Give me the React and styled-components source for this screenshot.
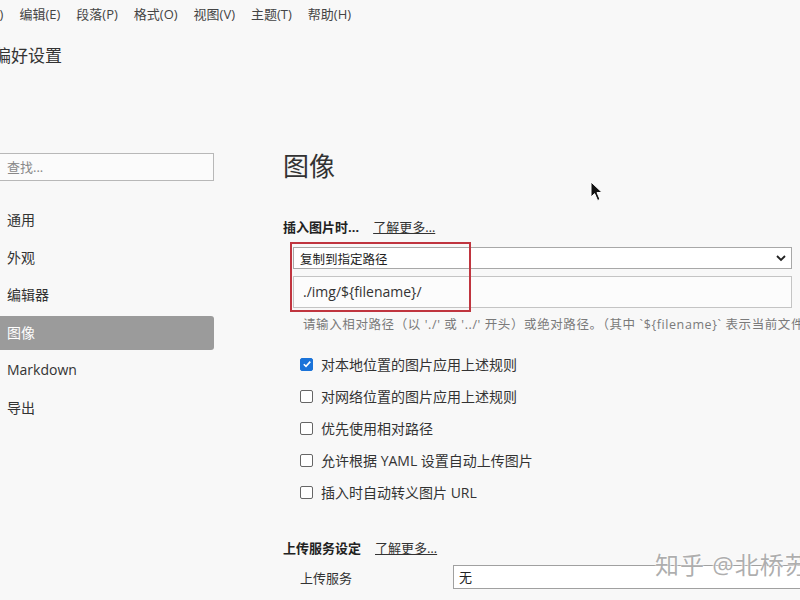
import React from 'react';
import styled, { createGlobalStyle } from 'styled-components';

const GlobalStyle = createGlobalStyle`
  html, body {
    margin: 0;
    padding: 0;
    background: #f8f8f8;
    overflow: hidden;
  }
  body {
    font-family: 'Open Sans', 'Noto Sans CJK SC', sans-serif;
    color: #333;
  }
`;

const Window = styled.div`
  position: relative;
  width: 806px;
  height: 600px;
  margin-left: -6px;
  overflow: hidden;
`;

const MenuBar = styled.div`
  display: flex;
  align-items: center;
  height: 28px;
  margin-left: -31px;
  gap: 16px;
  font-size: 13px;
  color: #444;
`;

const MenuItem = styled.span`
  line-height: 28px;
  white-space: nowrap;
`;

const Title = styled.div`
  height: 28px;
  line-height: 28px;
  margin-top: 14px;
  font-size: 17px;
  color: #333;
`;

const Body = styled.div`
  display: flex;
  margin-top: 69px;
`;

const Sidebar = styled.div`
  width: 220px;
  flex-shrink: 0;
  padding-top: 14px;
`;

const Search = styled.div`
  height: 26px;
  border: 1px solid #b8b8b8;
  background: #fbfbfb;
  padding-left: 12px;
  font-size: 13px;
  line-height: 26px;
  color: #888;
`;

const NavList = styled.div`
  margin-top: 22px;
  display: flex;
  flex-direction: column;
  gap: 3.5px;
`;

const NavItem = styled.div`
  height: 34px;
  line-height: 34px;
  padding-left: 13px;
  font-size: 14px;
  border-radius: 0 3px 3px 0;
  color: ${(p) => (p.$active ? '#fff' : '#333')};
  background: ${(p) => (p.$active ? '#9b9b9b' : 'transparent')};
`;

const Content = styled.div`
  flex: 1;
  padding: 9px 8px 0 69px;
  min-width: 0;
`;

const Heading = styled.div`
  font-size: 26px;
  line-height: 36px;
  height: 36px;
  color: #333;
`;

const SectionTitle = styled.div`
  display: flex;
  align-items: center;
  gap: 14px;
  height: 20px;
  line-height: 20px;
  margin-top: ${(p) => p.$top}px;
  font-size: 13px;
  font-weight: bold;
  color: #222;
`;

const MoreLink = styled.span`
  font-weight: normal;
  text-decoration: underline;
  color: #333;
`;

const Group = styled.div`
  position: relative;
  margin-top: 10px;
  padding-left: 10px;
`;

const Select = styled.div`
  display: flex;
  align-items: center;
  justify-content: space-between;
  height: 20px;
  border: 1px solid #a8a8a8;
  background: #fff;
  padding: 0 4px 0 6px;
  font-size: 12.5px;
  color: #222;
`;

const PathInput = styled.div`
  margin-top: 7px;
  height: 30px;
  border: 1px solid #c4c4c4;
  background: #fcfcfc;
  padding-left: 9px;
  line-height: 30px;
  font-size: 14px;
  color: #333;
`;

const Highlight = styled.div`
  position: absolute;
  left: 7px;
  top: -5px;
  width: 177px;
  height: 66px;
  border: 2px solid #c0353f;
`;

const Hint = styled.div`
  margin: 8px -8px 0 0;
  padding-left: 20px;
  font-size: 12.5px;
  letter-spacing: 0.6px;
  line-height: 18px;
  color: #7a7a7a;
  white-space: nowrap;
  overflow: hidden;
`;

const Options = styled.div`
  margin-top: 20px;
  padding-left: 17px;
  display: flex;
  flex-direction: column;
  gap: 12px;
`;

const Option = styled.label`
  display: flex;
  align-items: center;
  gap: 8px;
  height: 20px;
  font-size: 14px;
  color: #333;
`;

const Box = styled.span`
  width: 13px;
  height: 13px;
  box-sizing: border-box;
  border-radius: 2px;
  border: 1px solid ${(p) => (p.$checked ? '#1a73d9' : '#666')};
  background: ${(p) => (p.$checked ? '#1a73d9' : '#fff')};
  display: flex;
  align-items: center;
  justify-content: center;
`;

const UploadRow = styled.div`
  display: flex;
  align-items: center;
  margin: 7px -8px 0 0;
  padding-left: 17px;
`;

const UploadLabel = styled.span`
  width: 153px;
  font-size: 13px;
  color: #333;
`;

const UploadSelect = styled.div`
  flex: 1;
  height: 22px;
  border: 1px solid #a0a0a0;
  border-right: none;
  background: #fff;
  padding-left: 5px;
  line-height: 22px;
  font-size: 13px;
  color: #222;
`;

const Watermark = styled.div`
  position: absolute;
  left: 661px;
  top: 550px;
  font-size: 24px;
  line-height: 30px;
  letter-spacing: 1px;
  white-space: nowrap;
  color: rgba(160, 160, 160, 0.85);
  text-shadow: 0 0 2px #fff, 0 0 2px #fff;
`;

const Pointer = styled.svg`
  position: absolute;
  left: 596px;
  top: 181px;
`;

function Check() {
  return (
    <svg width="10" height="10" viewBox="0 0 10 10">
      <path d="M1.8 5.2 L4 7.4 L8.3 2.6" stroke="#fff" strokeWidth="1.6" fill="none" />
    </svg>
  );
}

const menus = ['文件(F)', '编辑(E)', '段落(P)', '格式(O)', '视图(V)', '主题(T)', '帮助(H)'];
const navs = ['通用', '外观', '编辑器', '图像', 'Markdown', '导出'];
const options = [
  { text: '对本地位置的图片应用上述规则', checked: true },
  { text: '对网络位置的图片应用上述规则' },
  { text: '优先使用相对路径' },
  { text: '允许根据 YAML 设置自动上传图片' },
  { text: '插入时自动转义图片 URL' },
];

export default function App() {
  return (
    <Window>
      <GlobalStyle />
      <MenuBar>
        {menus.map((m) => (
          <MenuItem key={m}>{m}</MenuItem>
        ))}
      </MenuBar>
      <Title>偏好设置</Title>
      <Body>
        <Sidebar>
          <Search>查找...</Search>
          <NavList>
            {navs.map((n) => (
              <NavItem key={n} $active={n === '图像'}>{n}</NavItem>
            ))}
          </NavList>
        </Sidebar>
        <Content>
          <Heading>图像</Heading>
          <SectionTitle $top={33}>
            插入图片时…<MoreLink>了解更多…</MoreLink>
          </SectionTitle>
          <Group>
            <Select>
              <span>复制到指定路径</span>
              <svg width="12" height="8" viewBox="0 0 12 8">
                <path d="M2 2 L6 6 L10 2" stroke="#222" strokeWidth="1.8" fill="none" />
              </svg>
            </Select>
            <PathInput>./img/${'{filename}'}/</PathInput>
            <Highlight />
          </Group>
          <Hint>
            请输入相对路径（以 './' 或 '../' 开头）或绝对路径。（其中 `${'{filename}'}` 表示当前文件
          </Hint>
          <Options>
            {options.map((o) => (
              <Option key={o.text}>
                <Box $checked={o.checked}>{o.checked && <Check />}</Box>
                {o.text}
              </Option>
            ))}
          </Options>
          <SectionTitle $top={36}>
            上传服务设定<MoreLink>了解更多…</MoreLink>
          </SectionTitle>
          <UploadRow>
            <UploadLabel>上传服务</UploadLabel>
            <UploadSelect>无</UploadSelect>
          </UploadRow>
        </Content>
      </Body>
      <Watermark>知乎 @北桥苏</Watermark>
      <Pointer width="14" height="22" viewBox="0 0 14 22">
        <path d="M1 1 L1 16 L4.6 12.6 L7.6 19.5 L10 18.4 L7 11.6 L12 11.4 Z" fill="#111" stroke="#fff" strokeWidth="1" />
      </Pointer>
    </Window>
  );
}
